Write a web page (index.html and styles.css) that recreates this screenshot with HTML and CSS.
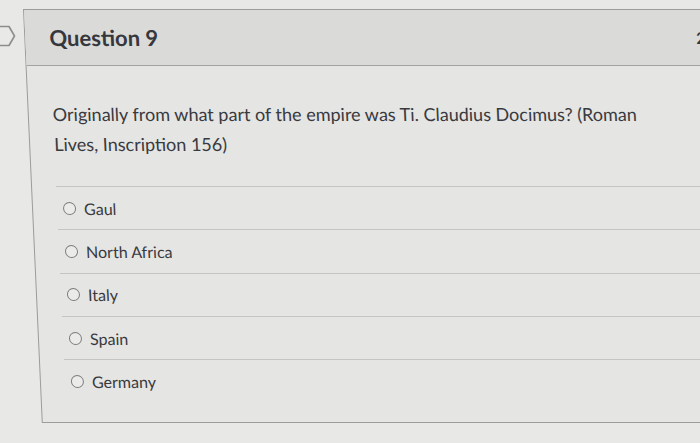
FILE: index.html
```html
<!DOCTYPE html>
<html lang="en">
<head>
<meta charset="utf-8">
<title>Question 9</title>
<link rel="stylesheet" href="styles.css">
</head>
<body>
<div class="page">
  <div class="flag">
    <svg width="16" height="22" viewBox="0 0 16 22" aria-hidden="true">
      <path d="M-2 1.5 H9 L14.5 11 L9 20.5 H-2" fill="#e9e9e7" stroke="#8d8d8b" stroke-width="1.6" stroke-linejoin="round"/>
    </svg>
  </div>
  <section class="card">
    <header class="card-header">
      <h2 class="title">Question 9</h2>
      <span class="pts">2 pts</span>
    </header>
    <div class="card-body">
      <p class="question">Originally from what part of the empire was Ti. Claudius Docimus? (Roman Lives, Inscription 156)</p>
      <ul class="answers">
        <li class="answer"><span class="radio"></span><span class="label">Gaul</span></li>
        <li class="answer"><span class="radio"></span><span class="label">North Africa</span></li>
        <li class="answer"><span class="radio"></span><span class="label">Italy</span></li>
        <li class="answer"><span class="radio"></span><span class="label">Spain</span></li>
        <li class="answer"><span class="radio"></span><span class="label">Germany</span></li>
      </ul>
    </div>
  </section>
</div>
</body>
</html>
```

FILE: styles.css
```css
html, body {
  margin: 0;
  padding: 0;
  overflow: hidden;
  background: #e8e8e6;
  font-family: Lato, "Open Sans", sans-serif;
  color: #393a40;
}

.page {
  display: flex;
  align-items: flex-start;
  padding-top: 9px;
  width: 780px;
}

.flag {
  width: 16px;
  margin-top: 16px;
  flex: none;
}

.flag svg {
  display: block;
}

.card {
  flex: none;
  margin-left: 7px;
  width: 730px;
  border: 1px solid #9c9c9a;
  background: #e5e5e3;
  transform: skewX(2.6deg);
  transform-origin: 0 0;
}

.card-header {
  height: 55px;
  display: flex;
  align-items: center;
  justify-content: space-between;
  padding: 0 24px;
  background: #dadad8;
  border-bottom: 1px solid #a2a2a0;
}

.title {
  margin: 0;
  font-size: 22px;
  font-weight: 700;
  color: #36373d;
}

.pts {
  font-size: 16px;
  font-weight: 700;
  color: #36373d;
}

.card-body {
  padding: 33px 0 20px 24px;
}

.question {
  margin: 0 0 27px;
  max-width: 600px;
  font-size: 18px;
  line-height: 30px;
}

.answers {
  list-style: none;
  margin: 0;
  padding: 0;
}

.answer {
  height: 42.3px;
  border-top: 1px solid #c4c4c2;
  display: flex;
  align-items: center;
  gap: 8px;
  padding-left: 6px;
  font-size: 16px;
}

.radio {
  width: 11px;
  height: 11px;
  border: 1.6px solid #7d7d7f;
  border-radius: 50%;
  background: #ebebe9;
  flex: none;
}
```
